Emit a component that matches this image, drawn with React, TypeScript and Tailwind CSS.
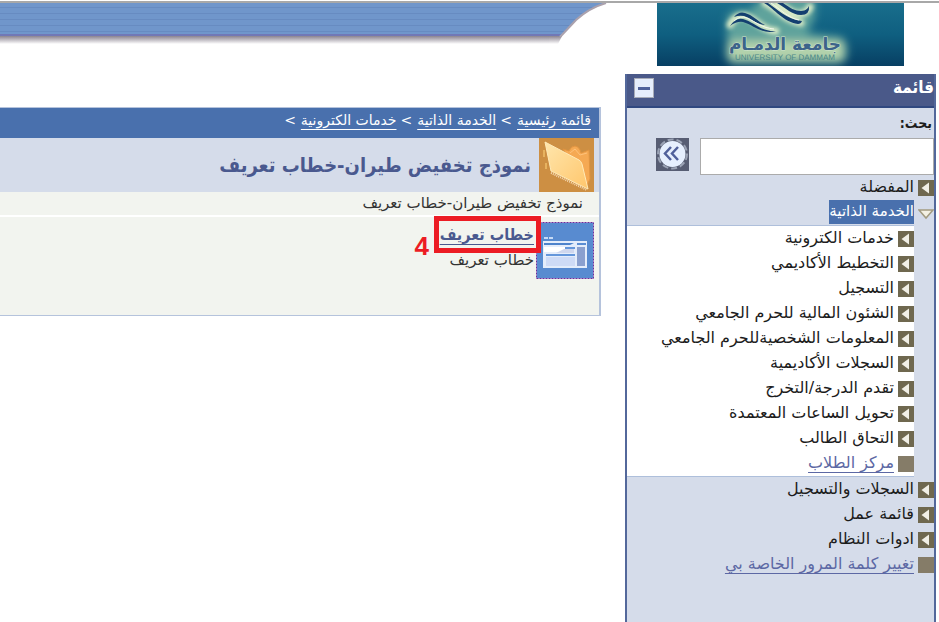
import { clsx } from 'clsx';

type MenuItem = {
  label: string;
  link?: boolean;
};

const favoriteItem: MenuItem = { label: 'المفضلة' };

const selfServiceItems: MenuItem[] = [
  { label: 'خدمات الكترونية' },
  { label: 'التخطيط الأكاديمي' },
  { label: 'التسجيل' },
  { label: 'الشئون المالية للحرم الجامعي' },
  { label: 'المعلومات الشخصيةللحرم الجامعي' },
  { label: 'السجلات الأكاديمية' },
  { label: 'تقدم الدرجة/التخرج' },
  { label: 'تحويل الساعات المعتمدة' },
  { label: 'التحاق الطالب' },
  { label: 'مركز الطلاب', link: true },
];

const systemItems: MenuItem[] = [
  { label: 'السجلات والتسجيل' },
  { label: 'قائمة عمل' },
  { label: 'ادوات النظام' },
  { label: 'تغيير كلمة المرور الخاصة بي', link: true },
];

const breadcrumbs = ['قائمة رئيسية', 'الخدمة الذاتية', 'خدمات الكترونية'];

const MenuRow = ({ label, link }: MenuItem) => (
  <li className="h-[25px]">
    <a href="#" className="flex h-full items-start gap-1 whitespace-nowrap">
      <svg viewBox="0 0 16 16" className="mt-[5px] size-4 shrink-0" aria-hidden="true">
        <rect width="16" height="16" fill={link ? '#857c68' : '#6f684f'} />
        {!link && <path d="M11 2.5v11L3.5 8z" fill="#f1efe6" />}
      </svg>
      <span className={clsx('leading-6', link ? 'text-[#5c68a4] underline underline-offset-4' : 'text-[#1c1c1c]')}>
        {label}
      </span>
    </a>
  </li>
);

const UniversityLogo = () => (
  <svg viewBox="0 0 247 63" className="h-[63px] w-[247px]" role="img" aria-label="جامعة الدمام">
    <defs>
      <linearGradient id="sea" x1="0" y1="0" x2="0" y2="1">
        <stop offset="0" stopColor="#196e8c" />
        <stop offset="0.5" stopColor="#0f5f80" />
        <stop offset="1" stopColor="#073f63" />
      </linearGradient>
      <filter id="glow" x="-30%" y="-50%" width="160%" height="200%">
        <feGaussianBlur stdDeviation="4" />
      </filter>
      <filter id="halo" x="-30%" y="-50%" width="160%" height="200%">
        <feGaussianBlur stdDeviation="2" />
      </filter>
    </defs>
    <rect width="247" height="63" fill="url(#sea)" />
    <g filter="url(#glow)">
      <path d="M70 14q8-10 22-6l14-14h52v20l-8 16 34 4q8 6 6 18-1 8-10 9H76q-8-3-7-14 2-10 1-12z" fill="#5fa39c" />
      <path d="M72 38h114v19H72z" fill="#b4d3ac" />
    </g>
    <g filter="url(#halo)" fill="none" stroke="#dcecc8" strokeLinecap="round">
      <path d="M73 22q6-11 15-9c11 3 16 14 31 15" strokeWidth="7" />
      <path d="M108 0c10 4 19 17 36 20" strokeWidth="7" />
      <path d="M120 0c8 3 13 11 22 11q8 0 11-7" strokeWidth="7" />
    </g>
    {/* waves */}
    <g fill="#143f70">
      <path d="M107 0h4c9 6 18 16 34 18q-1 3-4 3c-15-2-23-15-34-21z" />
      <path d="M120 0h6c7 5 12 8 18 8 5 0 7-3 8-5q1 9-8 9c-9 0-15-7-24-12z" />
      <path d="M73 23q6-9 13-7c11 3 18 13 33 12-14 4-22-6-33-9q-6-1-13 4z" />
      <path d="M77 14q5-6 11-4c8 2 12 8 20 12-10-1-14-7-21-9q-5-1-10 1z" />
    </g>
    <path d="M77 18q6-6 13-3c9 4 15 10 27 11M114 0c9 6 17 15 28 17" fill="none" stroke="#f4f8ec" />
    <text x="128" y="47" textAnchor="middle" fontSize="17" fontWeight="bold" fill="#3c638a" stroke="#cfe4cc" strokeWidth="1" paintOrder="stroke">
      جامعة الدمـام
    </text>
    <text x="128" y="57" textAnchor="middle" fontSize="8" fill="#4c8888" fontFamily="Liberation Sans, sans-serif" textRendering="geometricPrecision">
      UNIVERSITY OF DAMMAM
    </text>
  </svg>
);

const Banner = () => (
  <div className="flex h-11 min-w-0 flex-1">
    <svg viewBox="0 0 60 44" className="h-11 w-[60px] shrink-0" aria-hidden="true">
      <defs>
        <linearGradient id="shade" x1="0" y1="0" x2="0" y2="1">
          <stop offset="0" stopColor="#8b8490" />
          <stop offset="1" stopColor="#ffffff" />
        </linearGradient>
        <pattern id="stripes" width="60" height="6" patternUnits="userSpaceOnUse">
          <rect width="60" height="6" fill="#7096cb" />
          <rect y="4" width="60" height="1" fill="#678bc1" />
        </pattern>
      </defs>
      <path d="M0 33h13l-4 8H0z" fill="url(#shade)" />
      <path d="M0 0h57Q40 5 27 17L11 33H0z" fill="url(#stripes)" />
      <path d="M0 31h12l-2 2H0z" fill="#7178b6" />
      <path d="M57 0Q40 5 27 17L11 34" fill="none" stroke="#aaa1ad" strokeWidth="2" />
    </svg>
    <div className="flex-1">
      <div className="h-[31px] bg-[repeating-linear-gradient(#7096cb_0px_4px,#678bc1_4px_5px,#7096cb_5px_6px)]" />
      <div className="h-0.5 bg-[#7178b6]" />
      <div className="h-2 bg-linear-to-b from-[#8b8490] to-white" />
    </div>
  </div>
);

const FolderIcon = () => (
  <svg viewBox="0 0 55 54" className="h-[54px] w-[55px] shrink-0" aria-hidden="true">
    <defs>
      <linearGradient id="paper" x1="0" y1="0" x2="1" y2="1">
        <stop offset="0" stopColor="#ffe6ac" />
        <stop offset="1" stopColor="#ffc66c" />
      </linearGradient>
    </defs>
    <rect width="55" height="54" fill="#cd8f43" />
    <path d="M24 11l6 2q2-5 6-5 5 1 6 7l8-3 1 29-3 6z" fill="#f5a953" stroke="#e19440" strokeWidth="1" />
    <path d="M31 15l5-4 5 6 7-2" fill="none" stroke="#ffc27a" strokeWidth="1" />
    <path d="M6 4l34 18q2 1 3 4l6 25-37-18z" fill="url(#paper)" stroke="#ffeab8" strokeWidth="1" />
    <path d="M12 35l36 17" stroke="#f6dcb6" strokeWidth="2" strokeDasharray="1 1" />
    <path d="M5 12v7M7 25v6" stroke="#e7b25f" strokeWidth="2" />
  </svg>
);

const FormIcon = () => (
  <svg viewBox="0 0 58 57" className="h-[57px] w-[58px] shrink-0" aria-hidden="true">
    <rect width="58" height="57" fill="#588bd0" />
    <rect x="0.5" y="0.5" width="57" height="56" fill="none" stroke="#d9d3ee" />
    <rect x="0.5" y="0.5" width="57" height="56" fill="none" stroke="#6a2f99" strokeDasharray="2 1" />
    <path d="M8 16h4M13 16h4" stroke="#c6daf5" strokeWidth="2" />
    <rect x="7" y="19" width="44" height="27" fill="#e4edfb" />
    <path d="M8 21h30l-4 2H8z" fill="#4d83cc" />
    <path d="M8 25h24l-6 5H8z" fill="#fff" />
    <path d="M28 27h10v4H20z" fill="#cfd7ee" />
    <path d="M10 33h29M29 26h10" stroke="#6597db" strokeWidth="2" />
    <rect x="10" y="35" width="29" height="9" fill="#cedbf6" />
    <path d="M41 22h9" stroke="#5a8dd3" strokeWidth="2" />
    <rect x="41" y="25" width="8" height="19" fill="#8aa0cf" />
  </svg>
);

const Sidebar = () => (
  <nav className="flex w-[311px] shrink-0 flex-col border-x-2 border-[#53689b] bg-[#d5dcea]" aria-label="قائمة">
    <div className="flex h-[34px] items-start justify-between border-b-2 border-[#304880] bg-[#4a5989] pl-[7px]">
      <h2 className="font-['DejaVu_Sans_Condensed','DejaVu_Sans',sans-serif] text-[17px] leading-[26px] font-bold text-white">
        قائمة
      </h2>
      <button type="button" className="mt-1 flex size-5 items-center justify-center border border-[#a8acb8] bg-[#e6eefc]" aria-label="−">
        <span className="h-[3px] w-3 bg-[#50629b]" />
      </button>
    </div>

    <form>
      <label
        htmlFor="menu-search"
        className="block h-[30px] pr-0.5 font-['DejaVu_Sans_Condensed','DejaVu_Sans',sans-serif] text-sm leading-[30px] font-bold text-[#1c1c1c]"
      >
        بحث:
      </label>
      <div className="flex h-[37px] items-start gap-[11px] pl-[29px]">
        <input id="menu-search" type="text" className="h-[37px] min-w-0 flex-1 border border-[#ababab] bg-white px-2" />
        <button type="button" className="size-[33px] shrink-0" aria-label="بحث">
          <svg viewBox="0 0 33 33">
            <rect width="33" height="33" fill="#575d73" />
            <circle cx="16.5" cy="16" r="14.5" fill="none" stroke="#9ba3b5" strokeWidth="2" strokeDasharray="6 3" />
            <circle cx="16.5" cy="16" r="13" fill="#e6effe" />
            <path d="M15 9l-6 6.5 6 6.5M22 9l-6 6.5 6 6.5" fill="none" stroke="#50609b" strokeWidth="2.5" />
          </svg>
        </button>
      </div>
    </form>

    <ul>
      <MenuRow {...favoriteItem} />
      <li>
        <a href="#" className="flex h-[25px] items-start gap-1">
          <svg viewBox="0 0 16 16" className="mt-2 size-4 shrink-0" aria-hidden="true">
            <path d="M1 2h14L8 10z" fill="#f4f1e3" stroke="#a29b80" strokeWidth="1.5" />
          </svg>
          <span className="h-6 bg-[#4970ad] text-[15px] leading-[22px] text-white">الخدمة الذاتية</span>
        </a>
        <ul className="mr-5 border-y border-[#aebfdb] bg-white">
          {selfServiceItems.map((item) => (
            <MenuRow key={item.label} {...item} />
          ))}
        </ul>
      </li>
      {systemItems.map((item) => (
        <MenuRow key={item.label} {...item} />
      ))}
    </ul>
  </nav>
);

const ContentPanel = () => (
  <main className="mt-[33px] min-w-0 flex-1 self-start border-y border-r-2 border-[#b5c3dc] bg-[#f2f4ef]">
    <div className="flex h-[30px] items-start gap-1 bg-[#4970ad] pr-2 text-sm leading-6 whitespace-nowrap text-white">
      {breadcrumbs.map((crumb) => (
        <div key={crumb} className="flex gap-[5px]">
          <a href="#" className="underline underline-offset-4">
            {crumb}
          </a>
          <span>&gt;</span>
        </div>
      ))}
    </div>
    <div className="flex h-[54px] items-center gap-2 bg-[#d5dcea] pr-[5px]">
      <FolderIcon />
      <h1 className="font-['DejaVu_Sans_Condensed','DejaVu_Sans',sans-serif] text-xl leading-8 font-bold whitespace-nowrap text-[#4a598f]">
        نموذج تخفيض طيران-خطاب تعريف
      </h1>
    </div>
    <p className="h-[25px] border-b-2 border-white pr-4 text-[15px] leading-[22px] text-[#333]">
      نموذج تخفيض طيران-خطاب تعريف
    </p>
    <div className="flex h-[98px] items-start pt-[5px] pr-[5px]">
      <FormIcon />
      <div className="relative whitespace-nowrap">
        <h2 className="pr-0.5 font-['DejaVu_Sans_Condensed','DejaVu_Sans',sans-serif] text-base leading-[26px] font-bold text-[#4a598f]">
          <a href="#" className="underline underline-offset-4">
            خطاب تعريف
          </a>
        </h2>
        <p className="pr-0.5 text-[15px] leading-6 text-[#333]">خطاب تعريف</p>
        {/* step marker over the link */}
        <div className="absolute -top-1.5 -right-[5px] h-[37px] w-[107px] border-5 border-[#ec1c24]" />
        <span className="absolute top-2 right-[107px] font-[Liberation_Sans] text-[26px] leading-8 font-bold text-[#ec1c24]">4</span>
      </div>
    </div>
  </main>
);

export default function App() {
  return (
    <div
      dir="rtl"
      className="flex min-h-screen flex-col overflow-x-hidden bg-white pr-[3px] font-['DejaVu_Sans',sans-serif] text-base"
    >
      <div className="mt-px -mr-[3px] h-0.5 bg-[#a8a8a8]" />
      <header className="flex h-[71px] shrink-0 items-start gap-4">
        <div className="flex w-[311px] shrink-0 justify-center">
          <UniversityLogo />
        </div>
        <Banner />
      </header>
      <div className="flex flex-1 gap-6">
        <Sidebar />
        <ContentPanel />
      </div>
    </div>
  );
}
